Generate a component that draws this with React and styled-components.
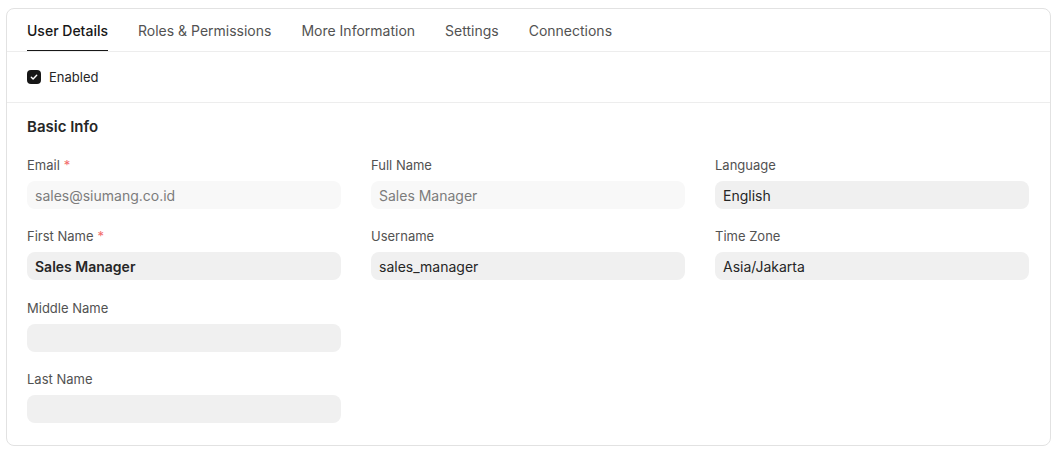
import styled, { createGlobalStyle } from 'styled-components';

const GlobalStyle = createGlobalStyle`
	* {
		box-sizing: border-box;
	}

	body {
		margin: 0;
		background: #ffffff;
		font-family: Inter, "Noto Sans", sans-serif;
		color: #171717;
		-webkit-font-smoothing: antialiased;
	}
`;

const Page = styled.div`
	padding: 8px 10px 0 6px;
`;

const Card = styled.div`
	border: 1px solid #e2e2e2;
	border-radius: 8px;
	background: #fff;
`;

const TabBar = styled.nav`
	display: flex;
	gap: 30px;
	height: 43px;
	padding: 0 20px;
	border-bottom: 1px solid #ededed;
`;

const Tab = styled.button`
	display: flex;
	align-items: center;
	height: 42px;
	padding: 0;
	border: 0;
	background: none;
	font-family: inherit;
	font-size: 14px;
	font-weight: ${({ $active }) => ($active ? 500 : 400)};
	color: ${({ $active }) => ($active ? '#171717' : '#525252')};
	box-shadow: ${({ $active }) => ($active ? 'inset 0 -1px 0 #171717' : 'none')};
	cursor: pointer;
`;

const Section = styled.section`
	padding: ${({ $pad }) => $pad};
	border-bottom: ${({ $last }) => ($last ? 'none' : '1px solid #ededed')};
`;

const CheckRow = styled.label`
	display: flex;
	align-items: center;
	gap: 8px;
	font-size: 13px;
	color: #262626;
	line-height: 16px;
`;

const CheckBox = styled.span`
	display: flex;
	align-items: center;
	justify-content: center;
	width: 14px;
	height: 14px;
	border-radius: 4px;
	background: #171717;
`;

const Heading = styled.h3`
	margin: 0 0 20px;
	padding-top: 1px;
	font-size: 15px;
	line-height: 20px;
	font-weight: 600;
	color: #262626;
`;

const Grid = styled.div`
	display: grid;
	grid-template-columns: repeat(3, 314px);
	gap: 30px;
`;

const Column = styled.div`
	display: flex;
	flex-direction: column;
	gap: 19.3px;
`;

const Field = styled.div`
	display: flex;
	flex-direction: column;
	gap: 7px;
`;

const Label = styled.span`
	font-size: 13px;
	line-height: 17px;
	color: #525252;
`;

const Req = styled.span`
	margin-left: 4px;
	color: #f26b6b;
`;

const Input = styled.div`
	display: flex;
	align-items: center;
	height: 28px;
	padding: 0 8px;
	border-radius: 8px;
	background: ${({ $readOnly }) => ($readOnly ? '#f8f8f8' : '#f0f0f0')};
	font-size: 14px;
	font-weight: ${({ $bold }) => ($bold ? 600 : 400)};
	color: ${({ $readOnly }) => ($readOnly ? '#7c7c7c' : '#262626')};
`;

const tabs = ['User Details', 'Roles & Permissions', 'More Information', 'Settings', 'Connections'];

const columns = [
	[
		{ label: 'Email', req: true, value: 'sales@siumang.co.id', readOnly: true },
		{ label: 'First Name', req: true, value: 'Sales Manager', bold: true },
		{ label: 'Middle Name', value: '' },
		{ label: 'Last Name', value: '' },
	],
	[
		{ label: 'Full Name', value: 'Sales Manager', readOnly: true },
		{ label: 'Username', value: 'sales_manager' },
	],
	[
		{ label: 'Language', value: 'English' },
		{ label: 'Time Zone', value: 'Asia/Jakarta' },
	],
];

const App = () => {
	return (
		<Page>
			<GlobalStyle />
			<Card>
				<TabBar>
					{tabs.map((t, i) => (
						<Tab key={t} $active={i === 0}>
							{t}
						</Tab>
					))}
				</TabBar>
				<Section $pad="17px 20px 17px">
					<CheckRow>
						<CheckBox>
							<svg width="8" height="8" viewBox="0 0 8 8" fill="none">
								<path
									d="M1.3 4.2 3.1 5.9 6.7 2.2"
									stroke="#fff"
									strokeWidth="1.4"
									strokeLinecap="round"
									strokeLinejoin="round"
								/>
							</svg>
						</CheckBox>
						Enabled
					</CheckRow>
				</Section>
				<Section $pad="13px 20px 22px" $last>
					<Heading>Basic Info</Heading>
					<Grid>
						{columns.map((col, ci) => (
							<Column key={ci}>
								{col.map((f) => (
									<Field key={f.label}>
										<Label>
											{f.label}
											{f.req && <Req>*</Req>}
										</Label>
										<Input $readOnly={f.readOnly} $bold={f.bold}>
											{f.value}
										</Input>
									</Field>
								))}
							</Column>
						))}
					</Grid>
				</Section>
			</Card>
		</Page>
	);
};

export default App;
